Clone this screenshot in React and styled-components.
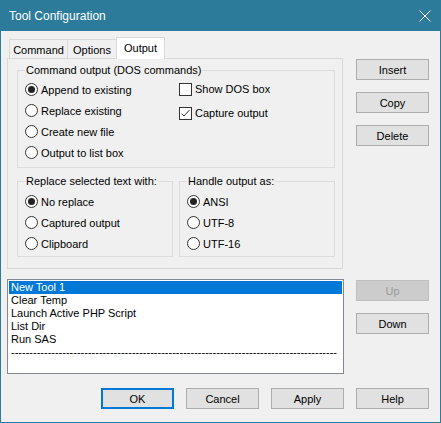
import React from "react";
import styled, { createGlobalStyle } from "styled-components";

const GlobalStyle = createGlobalStyle`
  html, body { margin: 0; padding: 0; background: #f0f0f0; }
  body { font-family: "Liberation Sans", Arial, sans-serif; font-size: 11px; color: #000; }
  *, *::before, *::after { box-sizing: border-box; }
`;

const TEAL = "#2c7b9a";

const Window = styled.div`
  width: 441px;
  height: 423px;
  border: 1px solid ${TEAL};
  border-top: none;
  background: #f0f0f0;
  display: flex;
  flex-direction: column;
`;

const TitleBar = styled.div`
  height: 31px;
  flex: none;
  background: ${TEAL};
  color: #fff;
  font-size: 12px;
  display: flex;
  align-items: center;
  padding: 1px 0 0 8px;
`;

const CloseIcon = styled.svg`
  margin-left: auto;
  margin-right: 9px;
  width: 12px;
  height: 12px;
  display: block;
`;

const Content = styled.div`
  display: flex;
  flex-direction: column;
  padding: 6px 11px 0 6px;
`;

const Row = styled.div`
  display: flex;
  justify-content: space-between;
  margin-top: ${(p) => p.$mt || 0}px;
`;

const LeftCol = styled.div`
  width: 336px;
  display: flex;
  flex-direction: column;
`;

const TabStrip = styled.div`
  height: 21px;
  display: flex;
  align-items: flex-end;
  padding-left: 2px;
  position: relative;
  z-index: 1;
`;

const Tab = styled.div`
  width: ${(p) => p.$w}px;
  height: ${(p) => (p.$active ? 22 : 19)}px;
  margin-bottom: ${(p) => (p.$active ? -1 : 0)}px;
  margin-left: ${(p) => (p.$first ? 0 : -1)}px;
  border: 1px solid #d9d9d9;
  border-bottom: none;
  background: ${(p) => (p.$active ? "#ffffff" : "#f0f0f0")};
  display: flex;
  justify-content: center;
  align-items: center;
  padding: ${(p) => (p.$active ? "0 0 2px" : "2px 0 0")};
  white-space: nowrap;
`;

const Panel = styled.div`
  height: 211px;
  border: 1px solid #d9d9d9;
  background: #f0f0f0;
  padding: 5px 7px 0 9px;
  display: flex;
  flex-direction: column;
  gap: 7px;
`;

const Group = styled.fieldset`
  margin: 0;
  min-width: 0;
  width: ${(p) => p.$w}px;
  border: 1px solid #dcdcdc;
  padding: ${(p) => p.$pt}px 0 ${(p) => p.$pb}px 7px;
`;

const Legend = styled.legend`
  padding: 0 1px;
  line-height: 13px;
  font-size: 11px;
`;

const GroupRow = styled.div`
  display: flex;
  gap: 6px;
`;

const Inner = styled.div`
  display: flex;
`;

const Column = styled.div`
  display: flex;
  flex-direction: column;
  width: ${(p) => (p.$w ? `${p.$w}px` : "auto")};
  padding-top: ${(p) => p.$pt || 0}px;
`;

const OptionRow = styled.div`
  height: ${(p) => p.$h || 21}px;
  display: flex;
  align-items: center;
  gap: 3px;
  white-space: nowrap;
`;

const RadioCircle = styled.span`
  width: 13px;
  height: 13px;
  flex: none;
  border: 1px solid #333;
  border-radius: 50%;
  background: #fff;
  display: flex;
  align-items: center;
  justify-content: center;
`;

const RadioDot = styled.span`
  width: 7px;
  height: 7px;
  border-radius: 50%;
  background: #222;
`;

const CheckBox = styled.span`
  width: 13px;
  height: 13px;
  flex: none;
  border: 1px solid #333;
  background: #fff;
  display: flex;
  align-items: center;
  justify-content: center;
`;

const RightCol = styled.div`
  width: 73px;
  display: flex;
  flex-direction: column;
  gap: 12px;
  padding-top: ${(p) => p.$pt || 0}px;
`;

const Button = styled.button`
  width: 73px;
  height: 21px;
  padding: 0;
  margin: 0;
  font-family: inherit;
  font-size: 11px;
  color: ${(p) => (p.disabled ? "#9a9a9a" : "#000")};
  background: ${(p) => (p.disabled ? "#cccccc" : "#e1e1e1")};
  border: ${(p) =>
    p.$default ? "2px solid #0078d7" : p.disabled ? "1px solid #bfbfbf" : "1px solid #adadad"};
  display: flex;
  align-items: center;
  justify-content: center;
`;

const ListBox = styled.div`
  width: 337px;
  height: 95px;
  border: 1px solid #828790;
  background: #fff;
  padding: 1px;
  overflow: hidden;
`;

const ListItem = styled.div`
  height: 13px;
  line-height: 13px;
  padding-left: 2px;
  white-space: nowrap;
  overflow: hidden;
  background: ${(p) => (p.$selected ? "#0078d7" : "transparent")};
  color: ${(p) => (p.$selected ? "#fff" : "#000")};
`;

const BottomRow = styled.div`
  display: flex;
  justify-content: flex-end;
  gap: 12px;
  margin-top: 14px;
`;

const Radio = ({ checked, children }) => (
  <OptionRow>
    <RadioCircle>{checked && <RadioDot />}</RadioCircle>
    <span>{children}</span>
  </OptionRow>
);

const Check = ({ checked, children }) => (
  <OptionRow $h={24}>
    <CheckBox>
      {checked && (
        <svg width="11" height="11" viewBox="0 0 11 11">
          <polyline points="1.5,5.5 4,8 9.5,2" fill="none" stroke="#333" strokeWidth="1" />
        </svg>
      )}
    </CheckBox>
    <span>{children}</span>
  </OptionRow>
);

export default function App() {
  return (
    <>
      <GlobalStyle />
      <Window>
        <TitleBar>
          <span>Tool Configuration</span>
          <CloseIcon viewBox="0 0 12 12">
            <line x1="0.5" y1="0.5" x2="11.5" y2="11.5" stroke="#fff" strokeWidth="1" />
            <line x1="11.5" y1="0.5" x2="0.5" y2="11.5" stroke="#fff" strokeWidth="1" />
          </CloseIcon>
        </TitleBar>
        <Content>
          <Row>
            <LeftCol>
              <TabStrip>
                <Tab $first $w={59}>Command</Tab>
                <Tab $w={50}>Options</Tab>
                <Tab $active $w={49}>Output</Tab>
              </TabStrip>
              <Panel>
                <Group $w={318} $pt={0} $pb={4}>
                  <Legend>Command output (DOS commands)</Legend>
                  <Inner>
                    <Column $w={154} $pt={2}>
                      <Radio checked>Append to existing</Radio>
                      <Radio>Replace existing</Radio>
                      <Radio>Create new file</Radio>
                      <Radio>Output to list box</Radio>
                    </Column>
                    <Column>
                      <Check>Show DOS box</Check>
                      <Check checked>Capture output</Check>
                    </Column>
                  </Inner>
                </Group>
                <GroupRow>
                  <Group $w={156} $pt={3} $pb={2}>
                    <Legend>Replace selected text with:</Legend>
                    <Column>
                      <Radio checked>No replace</Radio>
                      <Radio>Captured output</Radio>
                      <Radio>Clipboard</Radio>
                    </Column>
                  </Group>
                  <Group $w={156} $pt={3} $pb={2}>
                    <Legend>Handle output as:</Legend>
                    <Column>
                      <Radio checked>ANSI</Radio>
                      <Radio>UTF-8</Radio>
                      <Radio>UTF-16</Radio>
                    </Column>
                  </Group>
                </GroupRow>
              </Panel>
            </LeftCol>
            <RightCol $pt={22}>
              <Button>Insert</Button>
              <Button>Copy</Button>
              <Button>Delete</Button>
            </RightCol>
          </Row>
          <Row $mt={10}>
            <ListBox>
              <ListItem $selected>New Tool 1</ListItem>
              <ListItem>Clear Temp</ListItem>
              <ListItem>Launch Active PHP Script</ListItem>
              <ListItem>List Dir</ListItem>
              <ListItem>Run SAS</ListItem>
              <ListItem>{"-".repeat(89)}</ListItem>
            </ListBox>
            <RightCol $pt={1}>
              <Button disabled>Up</Button>
              <Button>Down</Button>
            </RightCol>
          </Row>
          <BottomRow>
            <Button $default>OK</Button>
            <Button>Cancel</Button>
            <Button>Apply</Button>
            <Button>Help</Button>
          </BottomRow>
        </Content>
      </Window>
    </>
  );
}
